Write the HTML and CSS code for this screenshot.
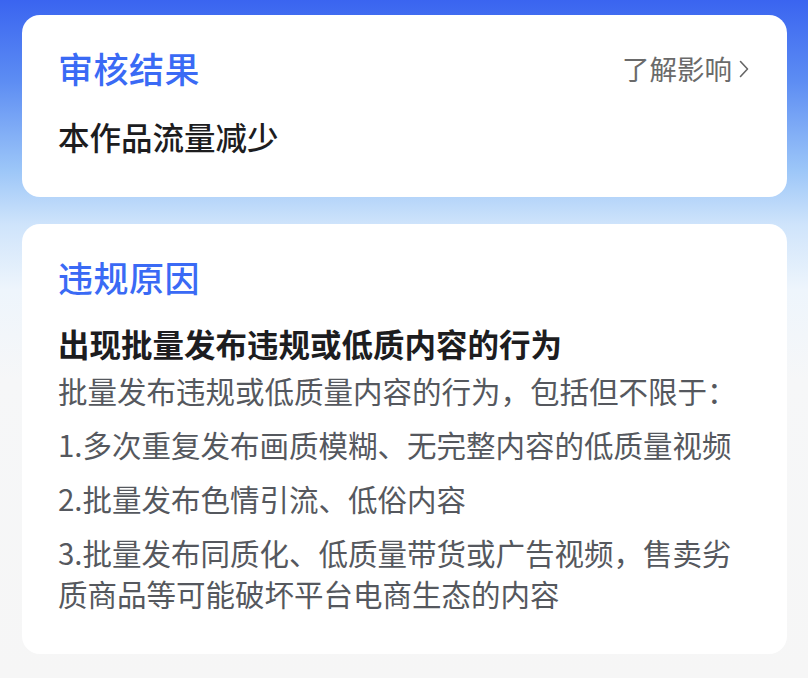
FILE: index.html
```html
<!DOCTYPE html>
<html lang="zh-CN">
<head>
<meta charset="utf-8">
<link rel="stylesheet" href="styles.css">
</head>
<body>
<div class="page">
  <section class="card card-result">
    <div class="card-head">
      <h2 class="card-title">审核结果</h2>
      <a class="more">了解影响<svg class="chev" viewBox="0 0 10 18" width="10" height="18"><path d="M1.5 1.5 L8.5 9 L1.5 16.5" fill="none" stroke="#666" stroke-width="1.6" stroke-linecap="round" stroke-linejoin="round"/></svg></a>
    </div>
    <p class="result-text">本作品流量减少</p>
  </section>
  <section class="card card-reason">
    <h2 class="card-title">违规原因</h2>
    <h3 class="reason-head">出现批量发布违规或低质内容的行为</h3>
    <p class="reason-text first">批量发布违规或低质量内容的行为，包括但不限于：</p>
    <p class="reason-text">1.多次重复发布画质模糊、无完整内容的低质量视频</p>
    <p class="reason-text">2.批量发布色情引流、低俗内容</p>
    <p class="reason-text">3.批量发布同质化、低质量带货或广告视频，售卖劣质商品等可能破坏平台电商生态的内容</p>
  </section>
</div>
</body>
</html>
```

FILE: styles.css
```css
* { box-sizing: border-box; }
html, body {
  margin: 0;
  padding: 0;
}
body {
  width: 808px;
  height: 678px;
  overflow: hidden;
  font-family: "Noto Sans CJK SC", "Noto Sans", sans-serif;
  background: linear-gradient(180deg, #3a64f0 0px, #5c8cf3 80px, #9cc6f8 170px, #cfe4fb 225px, #eef5fc 290px, #f6f7f8 380px, #f6f6f6 678px);
}
.page {
  padding: 15px 21px 0 22px;
  display: flex;
  flex-direction: column;
  gap: 27px;
}
.card {
  background: #fff;
  border-radius: 18px;
  padding: 33px 36px 39px 36px;
}
.card-head {
  display: flex;
  justify-content: space-between;
  align-items: center;
}
.card-title {
  margin: 0;
  font-size: 35px;
  line-height: 40px;
  font-weight: 500;
  color: #3a6af5;
  letter-spacing: 0.5px;
}
.more {
  display: flex;
  align-items: center;
  gap: 7px;
  font-size: 27.5px;
  line-height: 40px;
  color: #6a6a6a;
  margin-right: 2px;
}
.chev { margin-top: 1px; }
.result-text {
  margin: 26px 0 0;
  font-size: 31.5px;
  line-height: 44px;
  font-weight: 500;
  color: #1d1d1f;
}
.card-reason { padding-bottom: 40px; }
.reason-head {
  margin: 24px 0 0;
  font-size: 31.5px;
  line-height: 44px;
  font-weight: 700;
  color: #1d1d1f;
}
.reason-text {
  margin: 13px 0 0;
  font-size: 29.5px;
  line-height: 41px;
  color: #55585e;
}
.reason-text.first { margin-top: 5px; }
```
